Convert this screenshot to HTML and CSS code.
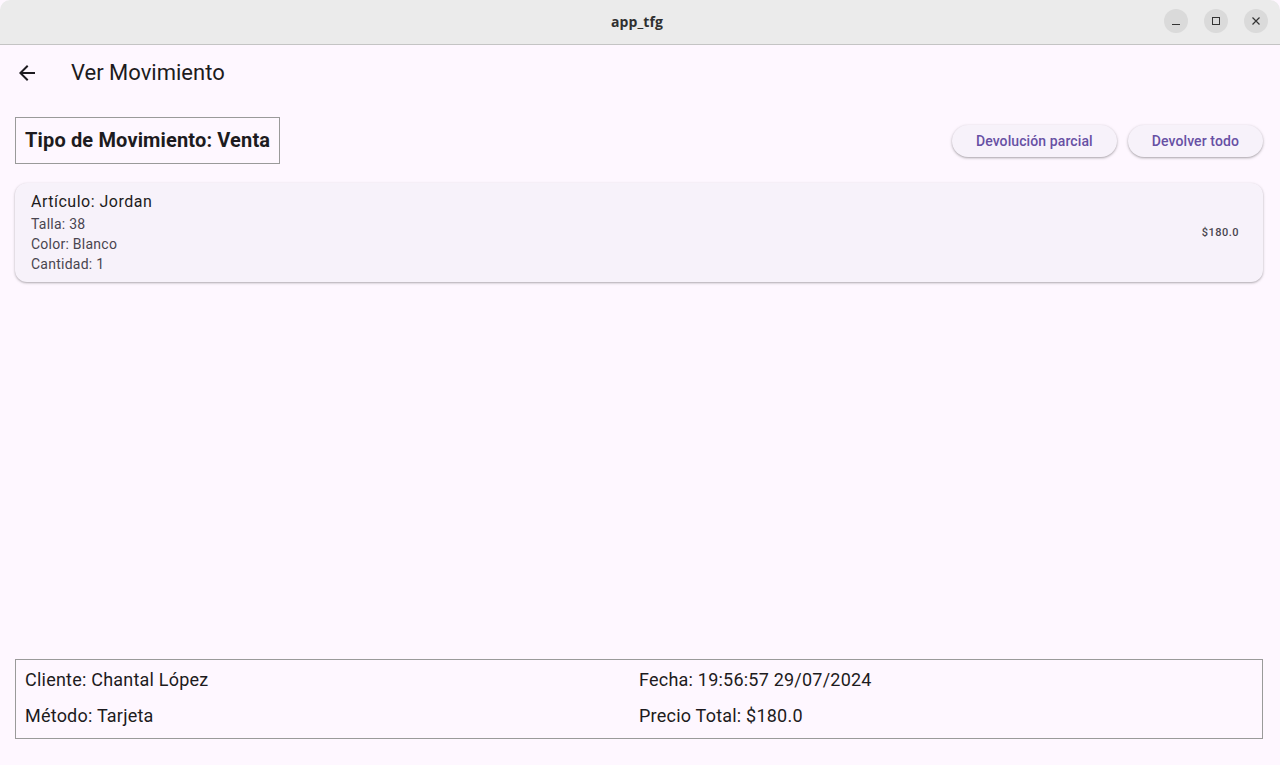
FILE: index.html
```html
<!DOCTYPE html>
<html lang="es">
<head>
<meta charset="utf-8">
<title>app_tfg</title>
<link rel="stylesheet" href="styles.css">
</head>
<body>
<div class="window">
  <header class="titlebar">
    <div class="titlebar-title">app_tfg</div>
    <div class="winbtns">
      <span class="winbtn"><svg width="10" height="10" viewBox="0 0 10 10"><path d="M1 8.5h8" stroke="#333" stroke-width="1"/></svg></span>
      <span class="winbtn"><svg width="10" height="10" viewBox="0 0 10 10"><rect x="1.5" y="1.5" width="7" height="7" fill="none" stroke="#333" stroke-width="1"/></svg></span>
      <span class="winbtn"><svg width="10" height="10" viewBox="0 0 10 10"><path d="M1.5 1.5l7 7M8.5 1.5l-7 7" stroke="#333" stroke-width="1.2"/></svg></span>
    </div>
  </header>
  <div class="appbar">
    <button class="back" aria-label="Volver">
      <svg width="24" height="24" viewBox="0 0 24 24"><path d="M20 11H7.83l5.59-5.59L12 4l-8 8 8 8 1.41-1.41L7.83 13H20v-2z" fill="#1d1b20"/></svg>
    </button>
    <h1 class="appbar-title">Ver Movimiento</h1>
  </div>
  <main class="content">
    <div class="toprow">
      <div class="typebox">Tipo de Movimiento: Venta</div>
      <div class="actions">
        <button class="pill">Devolución parcial</button>
        <button class="pill">Devolver todo</button>
      </div>
    </div>
    <div class="card">
      <div class="card-text">
        <div class="card-title">Artículo: Jordan</div>
        <div class="card-sub">Talla: 38</div>
        <div class="card-sub">Color: Blanco</div>
        <div class="card-sub">Cantidad: 1</div>
      </div>
      <div class="card-price">$180.0</div>
    </div>
    <div class="summary">
      <div class="summary-cell">Cliente: Chantal López</div>
      <div class="summary-cell">Fecha: 19:56:57 29/07/2024</div>
      <div class="summary-cell">Método: Tarjeta</div>
      <div class="summary-cell">Precio Total: $180.0</div>
    </div>
  </main>
</div>
</body>
</html>
```

FILE: styles.css
```css
* { box-sizing: border-box; }
html, body { margin: 0; padding: 0; }
body {
  width: 1280px;
  height: 765px;
  overflow: hidden;
  background: #fef7ff;
  font-family: Roboto, "Liberation Sans", sans-serif;
  color: #1d1b20;
}
.window {
  height: 765px;
  display: flex;
  flex-direction: column;
}
.titlebar {
  height: 45px;
  flex: none;
  background: #ebebeb;
  border-bottom: 1px solid #c4c4c4;
  border-top-left-radius: 10px;
  border-top-right-radius: 10px;
  display: flex;
  align-items: center;
  justify-content: center;
  position: relative;
}
.titlebar-title {
  font-family: "Open Sans", "DejaVu Sans", sans-serif;
  font-weight: 700;
  font-size: 14px;
  color: #303030;
  letter-spacing: 0.1px;
  margin-top: -2px;
  margin-left: -6px;
}
.winbtns {
  position: absolute;
  right: 12px;
  top: 9px;
  display: flex;
  gap: 16px;
}
.winbtn {
  width: 24px;
  height: 24px;
  border-radius: 50%;
  background: #dadada;
  display: flex;
  align-items: center;
  justify-content: center;
}
.appbar {
  height: 56px;
  flex: none;
  display: flex;
  align-items: center;
  padding-left: 3px;
}
.back {
  width: 48px;
  height: 48px;
  border: none;
  background: none;
  padding: 0;
  display: flex;
  align-items: center;
  justify-content: center;
}
.appbar-title {
  margin: 0 0 0 20px;
  font-size: 22px;
  font-weight: 400;
  color: #1d1b20;
  margin-top: -1px;
}
.content {
  flex: 1;
  display: flex;
  flex-direction: column;
  padding: 16px 17px 26px 15px;
}
.toprow {
  display: flex;
  align-items: center;
  justify-content: space-between;
}
.typebox {
  height: 47px;
  padding: 0 9px 2px 9px;
  border: 1px solid #9a9a9a;
  display: flex;
  align-items: center;
  font-size: 20px;
  font-weight: 700;
  letter-spacing: 0.15px;
  color: #1d1b20;
}
.actions {
  display: flex;
  gap: 11px;
}
.pill {
  height: 32px;
  padding: 0 24px;
  border: none;
  border-radius: 16px;
  background: #f7f2fa;
  color: #6750a4;
  font-family: Roboto, "Liberation Sans", sans-serif;
  font-size: 14px;
  font-weight: 500;
  letter-spacing: 0.1px;
  box-shadow: 0 1px 2px rgba(0,0,0,0.25), 0 1px 3px 1px rgba(0,0,0,0.08);
}
.card {
  margin-top: 19px;
  height: 99px;
  background: #f7f2fa;
  border-radius: 12px;
  box-shadow: 0 1px 2px rgba(0,0,0,0.25), 0 1px 3px 1px rgba(0,0,0,0.06);
  display: flex;
  align-items: center;
  justify-content: space-between;
  padding: 0 24px 0 16px;
}
.card-text {
  display: flex;
  flex-direction: column;
  margin-top: -1px;
}
.card-title {
  font-size: 16px;
  line-height: 24px;
  letter-spacing: 0.5px;
  color: #1d1b20;
}
.card-sub {
  font-size: 14px;
  line-height: 20px;
  letter-spacing: 0.25px;
  color: #49454f;
}
.card-price {
  font-size: 11px;
  font-weight: 500;
  letter-spacing: 0.5px;
  color: #49454f;
}
.summary {
  margin-top: auto;
  border: 1px solid #9a9a9a;
  padding: 8px 9px 10px 9px;
  display: grid;
  grid-template-columns: 1fr 1fr;
  grid-auto-rows: 24px;
  row-gap: 12px;
}
.summary-cell {
  font-size: 18px;
  line-height: 24px;
  letter-spacing: 0.22px;
  color: #1d1b20;
}
```
